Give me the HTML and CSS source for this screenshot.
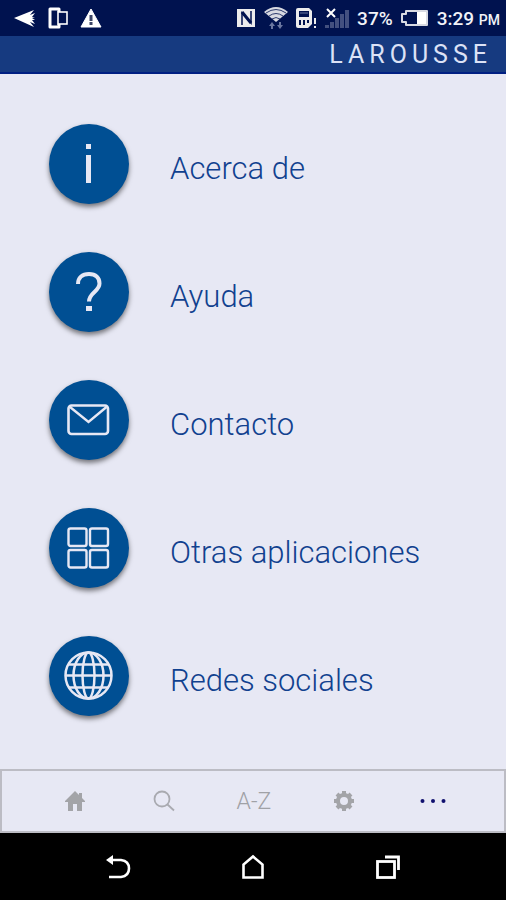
FILE: index.html
```html
<!DOCTYPE html>
<html lang="es">
<head>
    <meta charset="UTF-8">
    <meta name="viewport" content="width=device-width, initial-scale=1.0">
    <title>Larousse</title>
    <link rel="stylesheet" href="styles.css">
</head>
<body>
    <div class="status-bar">
        <div class="status-left">
            <svg width="22" height="20" viewBox="0 0 22 20" fill="#fff">
                <path d="M0 10L20 2l-4 5 5-2-3 4h3l-3 1 3 2h-3l3 4-5-2 4 5z"/>
            </svg>
            <svg width="20" height="22" viewBox="0 0 20 22" fill="none" stroke="#fff">
                <path d="M11 5V2H2v18h9v-3" stroke-width="3" stroke-linejoin="round"/>
                <rect x="10" y="5" width="9" height="12" stroke-width="1.6"/>
            </svg>
            <svg width="22" height="20" viewBox="0 0 22 20">
                <path d="M11 1l10 18H1z" fill="#fff" stroke="#fff" stroke-linejoin="round"/>
                <path d="M11 7v6M11 14v3" stroke="#3c4566" stroke-width="3"/>
            </svg>
        </div>
        <div class="status-right">
            <svg width="20" height="20" viewBox="0 0 20 20">
                <path d="M1 1h18v18H1z" fill="#ececec"/>
                <path d="M6 17V5l9 10V3" fill="none" stroke="#00124f" stroke-width="1.500"/>
                <path d="M6 4l9 11" stroke="#00124f" stroke-width="3"/>
            </svg>
            <svg width="24" height="24" viewBox="0 0 24 24">
                <path d="M0 6Q12-4 24 6L12 16z" fill="#d8dae2"/>
                <path d="M2 7q10-7 20 0M5 10q7-5 14 0M8 13q4-3 8 0" fill="none" stroke="#00124f" stroke-width="0.800"/>
                <path d="M8 16l3 4H9v3H7v-3H5zM16 23l3-4h-2v-3h-2v3h-2z" fill="#6976a0"/>
            </svg>
            <svg width="21" height="22" viewBox="0 0 21 22">
                <path d="M2 1h11l3 3v13l-4 4H2q-2 0-2-2V3q0-2 2-2z" fill="#ececec"/>
                <path d="M3 4h10v6H3zM3 13h2v5H3zM7 13h2v5H7zM11 13h2v3h-2z" fill="#00124f"/>
                <path d="M4 6h8" stroke="#6976a0"/>
                <path d="M19 10v7M19 19v3" stroke="#00124f" stroke-width="4"/>
                <path d="M19 11v6M19 19v2" stroke="#ececec" stroke-width="2"/>
            </svg>
            <svg width="24" height="22" viewBox="0 0 24 22">
                <path d="M0 18h4v3H0zM5 15h4v6H5zM10 11h4v10h-4zM15 7h4v14h-4zM20 3h4v18h-4z" fill="#43507f"/>
                <path d="M2 2l8 8M10 2l-8 8" stroke="#fff" stroke-width="2"/>
            </svg>
            <span class="battery-text">37%</span>
            <svg width="28" height="18" viewBox="0 0 28 18">
                <path d="M5 2h21v14H5v-3H1V5h4z" fill="none" stroke="#d8dae2" stroke-width="2" stroke-linejoin="round"/>
                <path d="M16 3h9v12h-9z" fill="#fff"/>
            </svg>
            <span class="clock">3:29 <small>PM</small></span>
        </div>
    </div>

    <header class="app-header">LAROUSSE</header>

    <main class="menu">
        <a class="menu-item" href="#">
            <span class="menu-icon">
                <svg width="50" height="50" viewBox="0 0 50 50" fill="#e7e8f4">
                    <path d="M22 5h5v5h-5zM22 16h5v28h-5z"/>
                </svg>
            </span>
            <span class="menu-label">Acerca de</span>
        </a>
        <a class="menu-item" href="#">
            <span class="menu-icon">
                <svg width="50" height="50" viewBox="0 0 50 50">
                    <path d="M14 17c0-6 4-10 11-10s10.500 4 10.500 9.500c0 8-10.500 9-10.500 18" fill="none" stroke="#e7e8f4" stroke-width="4"/>
                    <path d="M22 39h6v5h-6z" fill="#e7e8f4"/>
                </svg>
            </span>
            <span class="menu-label">Ayuda</span>
        </a>
        <a class="menu-item" href="#">
            <span class="menu-icon">
                <svg width="50" height="50" viewBox="0 0 50 50" fill="none" stroke="#e7e8f4" stroke-width="2.600">
                    <rect x="4.500" y="10.500" width="39.500" height="28.500" rx="3"/>
                    <path d="M6 12l18.500 15 18-15" stroke-width="2.400"/>
                </svg>
            </span>
            <span class="menu-label">Contacto</span>
        </a>
        <a class="menu-item" href="#">
            <span class="menu-icon">
                <svg width="50" height="50" viewBox="0 0 50 50" fill="none" stroke="#e7e8f4" stroke-width="2.400">
                    <rect x="4.500" y="5.500" width="18" height="17.500" rx="2"/>
                    <rect x="26" y="5.500" width="18" height="17.500" rx="2"/>
                    <rect x="4.500" y="27" width="18" height="17.500" rx="2"/>
                    <rect x="26" y="27" width="18" height="17.500" rx="2"/>
                </svg>
            </span>
            <span class="menu-label">Otras aplicaciones</span>
        </a>
        <a class="menu-item" href="#">
            <span class="menu-icon">
                <svg width="50" height="50" viewBox="0 0 50 50" fill="none" stroke="#e7e8f4" stroke-width="2.500">
                    <circle cx="24.500" cy="24.500" r="23"/>
                    <ellipse cx="24.500" cy="24.500" rx="15" ry="23"/>
                    <ellipse cx="24.500" cy="24.500" rx="6" ry="23"/>
                    <path d="M5 13.500h39M2 24.500h45M5 36.500h39"/>
                </svg>
            </span>
            <span class="menu-label">Redes sociales</span>
        </a>
    </main>

    <nav class="tab-bar">
        <a class="tab" href="#" aria-label="Inicio">
            <svg width="20" height="20" viewBox="0 0 20 20" fill="#a3a4a8">
                <path d="M10 0l4 4V2h3v5l3 3v1h-3v9h-5v-7H8v7H3v-9H0v-1z"/>
            </svg>
        </a>
        <a class="tab" href="#" aria-label="Buscar">
            <svg width="22" height="22" viewBox="0 0 22 22" fill="none" stroke="#a9aab0" stroke-width="1.800">
                <circle cx="9" cy="9" r="7.500"/>
                <path d="M14.500 14.500l6.500 6"/>
            </svg>
        </a>
        <a class="tab" href="#">A-Z</a>
        <a class="tab" href="#" aria-label="Ajustes">
            <svg width="22" height="22" viewBox="0 0 22 22" fill="none" stroke="#a3a4a8">
                <circle cx="11" cy="11" r="6" stroke-width="4"/>
                <path d="M11 1v3M11 18v3M1 11h3M18 11h3M4 4l2 2M16 16l2 2M4 18l2-2M16 6l2-2" stroke-width="4"/>
            </svg>
        </a>
        <a class="tab" href="#" aria-label="Más">
            <svg width="26" height="6" viewBox="0 0 26 6" fill="#10106e">
                <circle cx="2.500" cy="3" r="2"/>
                <circle cx="13" cy="3" r="2"/>
                <circle cx="23.500" cy="3" r="2"/>
            </svg>
        </a>
    </nav>

    <div class="system-nav">
        <button class="system-button" type="button" aria-label="Atrás">
            <svg width="26" height="26" viewBox="0 0 26 26">
                <path d="M6 6h10q8 1 8 8.500T16 23H4" fill="none" stroke="#fff" stroke-width="2.600"/>
                <path d="M1 6l7-5v10z" fill="#fff"/>
            </svg>
        </button>
        <button class="system-button" type="button" aria-label="Pantalla de inicio">
            <svg width="26" height="26" viewBox="0 0 26 26">
                <path d="M3.500 23.500V10.500L13 2.500l9.500 8v13z" fill="none" stroke="#fff" stroke-width="2.600"/>
            </svg>
        </button>
        <button class="system-button" type="button" aria-label="Recientes">
            <svg width="26" height="26" viewBox="0 0 26 26" fill="none" stroke="#fff" stroke-width="2.800">
                <rect x="2.500" y="7.500" width="17" height="16"/>
                <path d="M10 3h13.500v13"/>
            </svg>
        </button>
    </div>
</body>
</html>
```
FILE: styles.css
```css
body {
    margin: 0;
    min-height: 100vh;
    display: flex;
    flex-direction: column;
    font-family: Roboto, "Liberation Sans", sans-serif;
    background-color: #e7e8f4;
}
a {
    color: inherit;
    text-decoration: none;
}
svg {
    display: block;
    flex-shrink: 0;
}

/* Phone status bar */
.status-bar {
    height: 36px;
    padding: 0 6px 0 14px;
    display: flex;
    justify-content: space-between;
    align-items: center;
    background-color: #00124f;
    color: #f2f3f8;
}
.status-left {
    display: flex;
    align-items: center;
    gap: 12px;
}
.status-right {
    display: flex;
    align-items: center;
    gap: 8px;
    font-size: 19px;
    font-weight: 500;
}
.clock small {
    font-size: 14px;
}

.app-header {
    height: 36px;
    padding: 0 14px;
    border-bottom: 2px solid #001f82;
    background-color: #163a80;
    color: #dce2f6;
    font-size: 25px;
    line-height: 38px;
    letter-spacing: 5px;
    text-align: right;
}

.menu {
    flex: 1;
    padding: 50px 49px;
    display: flex;
    flex-direction: column;
    gap: 48px;
}
.menu-item {
    display: flex;
    align-items: center;
    gap: 41px;
}
.menu-icon {
    width: 80px;
    height: 80px;
    flex-shrink: 0;
    display: flex;
    justify-content: center;
    align-items: center;
    border-radius: 50%;
    background-color: #004f93;
    box-shadow: 0 3px 5px rgba(0, 0, 0, 0.5);
}
.menu-label {
    padding-top: 8px;
    font-size: 31px;
    font-weight: 300;
    color: #11418f;
}

.tab-bar {
    height: 60px;
    padding: 0 26px 0 28px;
    display: grid;
    grid-template-columns: repeat(5, 1fr);
    border: 2px solid #bcbcc4;
}
.tab {
    display: flex;
    justify-content: center;
    align-items: center;
    font-size: 23px;
    font-weight: 300;
    color: #a0a1a6;
}

.system-nav {
    height: 67px;
    padding: 0 51px;
    display: grid;
    grid-template-columns: repeat(3, 1fr);
    background-color: #000;
}
.system-button {
    padding: 0;
    border: 0;
    background: none;
    display: flex;
    justify-content: center;
    align-items: center;
}
```
